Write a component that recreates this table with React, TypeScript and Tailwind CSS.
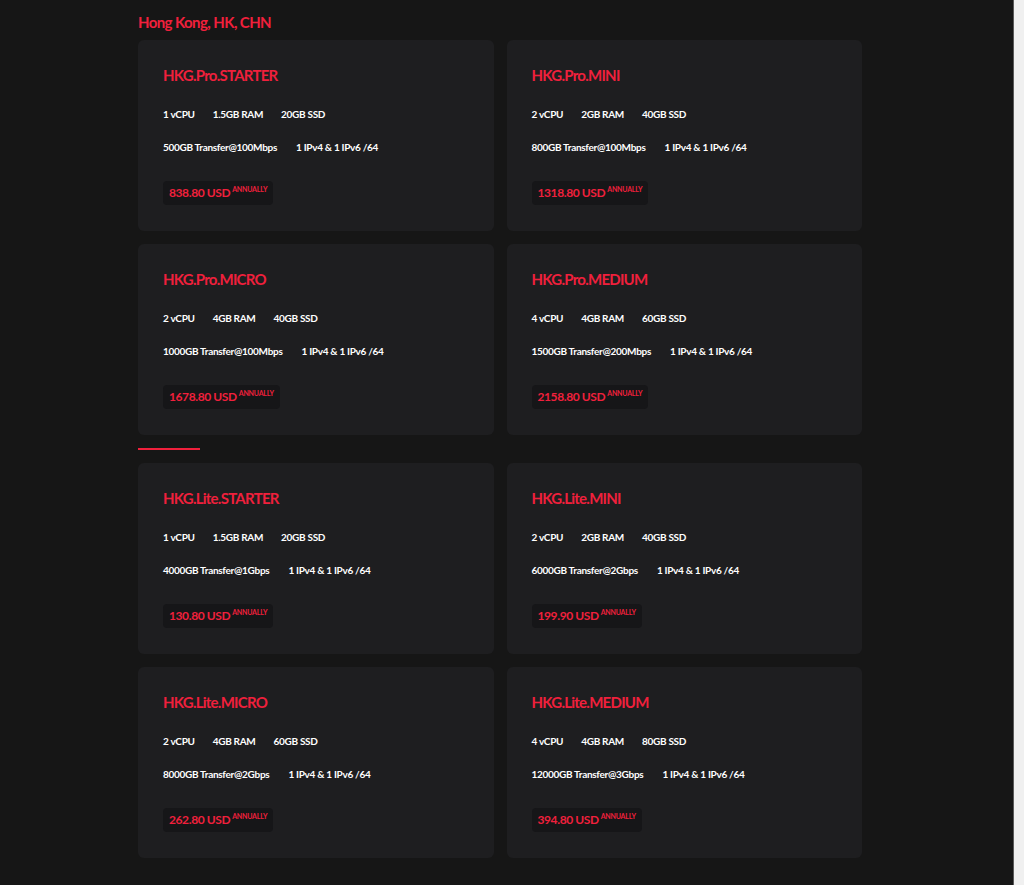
import React from "react";

type Plan = {
  name: string;
  specs: string[];
  net: string[];
  price: string;
};

const proPlans: Plan[] = [
  { name: "HKG.Pro.STARTER", specs: ["1 vCPU", "1.5GB RAM", "20GB SSD"], net: ["500GB Transfer@100Mbps", "1 IPv4 & 1 IPv6 /64"], price: "838.80" },
  { name: "HKG.Pro.MINI", specs: ["2 vCPU", "2GB RAM", "40GB SSD"], net: ["800GB Transfer@100Mbps", "1 IPv4 & 1 IPv6 /64"], price: "1318.80" },
  { name: "HKG.Pro.MICRO", specs: ["2 vCPU", "4GB RAM", "40GB SSD"], net: ["1000GB Transfer@100Mbps", "1 IPv4 & 1 IPv6 /64"], price: "1678.80" },
  { name: "HKG.Pro.MEDIUM", specs: ["4 vCPU", "4GB RAM", "60GB SSD"], net: ["1500GB Transfer@200Mbps", "1 IPv4 & 1 IPv6 /64"], price: "2158.80" },
];

const litePlans: Plan[] = [
  { name: "HKG.Lite.STARTER", specs: ["1 vCPU", "1.5GB RAM", "20GB SSD"], net: ["4000GB Transfer@1Gbps", "1 IPv4 & 1 IPv6 /64"], price: "130.80" },
  { name: "HKG.Lite.MINI", specs: ["2 vCPU", "2GB RAM", "40GB SSD"], net: ["6000GB Transfer@2Gbps", "1 IPv4 & 1 IPv6 /64"], price: "199.90" },
  { name: "HKG.Lite.MICRO", specs: ["2 vCPU", "4GB RAM", "60GB SSD"], net: ["8000GB Transfer@2Gbps", "1 IPv4 & 1 IPv6 /64"], price: "262.80" },
  { name: "HKG.Lite.MEDIUM", specs: ["4 vCPU", "4GB RAM", "80GB SSD"], net: ["12000GB Transfer@3Gbps", "1 IPv4 & 1 IPv6 /64"], price: "394.80" },
];

const PlanCard = ({ plan }: { plan: Plan }) => (
  <div className="bg-[#1e1e20] rounded-md h-[191px] px-[25px] pt-[25px]">
    <h3 className="text-[#f0203c] text-[15px] font-bold leading-[20px] tracking-[-0.75px]">{plan.name}</h3>
    <div className="flex gap-[18px] text-white text-[10px] font-bold leading-[14px] tracking-[-0.3px] mt-[22px]">
      {plan.specs.map((s) => (
        <span key={s}>{s}</span>
      ))}
    </div>
    <div className="flex gap-[19px] text-white text-[10px] font-bold leading-[14px] tracking-[-0.3px] mt-[19px]">
      {plan.net.map((s) => (
        <span key={s}>{s}</span>
      ))}
    </div>
    <div className="inline-flex items-start bg-[#161618] rounded-[4px] h-[24px] px-[6px] mt-[27px]">
      <span className="text-[#f0203c] text-[12px] font-bold leading-[24px] tracking-[-0.4px]">{plan.price} USD</span>
      <span className="text-[#f0203c] text-[7px] font-bold leading-none tracking-[-0.2px] mt-[5px] ml-[2px]">ANNUALLY</span>
    </div>
  </div>
);

export default function App() {
  return (
    <div className="flex min-h-screen font-['Lato',sans-serif]">
      <div className="flex-1 bg-[#161616] border-r border-[#5a5a5a]">
        <div className="w-[724px] ml-[138px] pt-[12px] pb-[28px]">
          <h2 className="text-[#f0203c] text-[15px] font-bold leading-[20px] tracking-[-0.6px]">Hong Kong, HK, CHN</h2>
          <div className="grid grid-cols-2 gap-x-[13px] gap-y-[13px] mt-[8px]">
            {proPlans.map((p) => (
              <PlanCard key={p.name} plan={p} />
            ))}
          </div>
          <div className="w-[62px] h-[2px] bg-[#f0203c] mt-[13px] mb-[13px]" />
          <div className="grid grid-cols-2 gap-x-[13px] gap-y-[13px]">
            {litePlans.map((p) => (
              <PlanCard key={p.name} plan={p} />
            ))}
          </div>
        </div>
      </div>
      <div className="w-[10px] bg-[#f0f0f0]" />
    </div>
  );
}
